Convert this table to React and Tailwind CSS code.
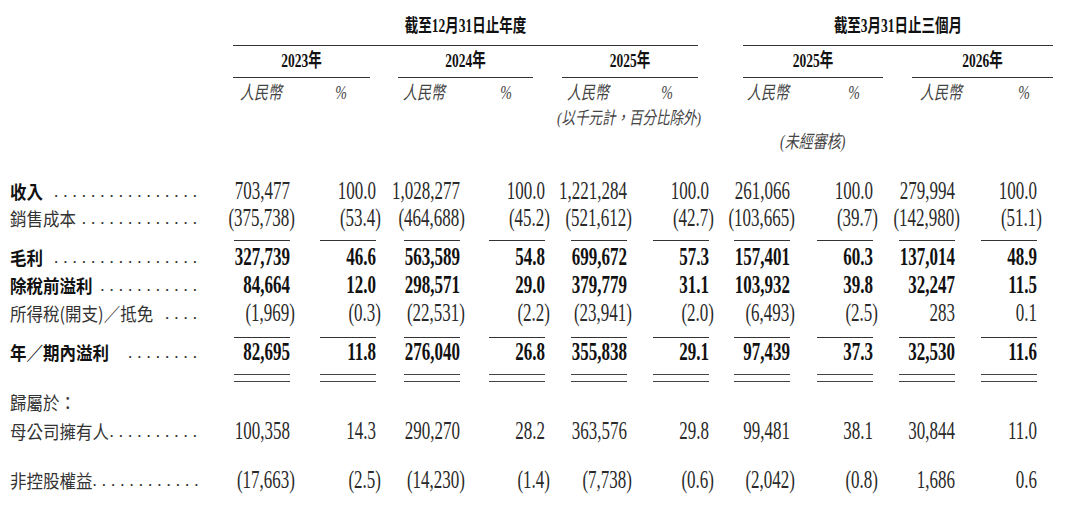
import React from 'react';

const COLS = 'grid grid-cols-[208px_82px_86px_84px_85px_82px_82px_81px_83px_82px_82px]';
const SERIF = "font-['Liberation_Serif','Noto_Sans_CJK_TC',serif]";
const CJK = "font-['Noto_Sans_CJK_TC',sans-serif]";

const ROWS = [
  { label: '收入', bold: true, dots: 16, h: 'h-[26px]', vals: ['703,477', '100.0', '1,028,277', '100.0', '1,221,284', '100.0', '261,066', '100.0', '279,994', '100.0'] },
  { label: '銷售成本', dots: 13, h: 'h-[28px]', vals: ['(375,738)', '(53.4)', '(464,688)', '(45.2)', '(521,612)', '(42.7)', '(103,665)', '(39.7)', '(142,980)', '(51.1)'] },
  { rule: 'single', h: 'h-[12px]', pad: 'pt-[8px]' },
  { label: '毛利', bold: true, numBold: true, dots: 16, h: 'h-[26px]', vals: ['327,739', '46.6', '563,589', '54.8', '699,672', '57.3', '157,401', '60.3', '137,014', '48.9'] },
  { label: '除稅前溢利', bold: true, numBold: true, dots: 11, h: 'h-[30px]', vals: ['84,664', '12.0', '298,571', '29.0', '379,779', '31.1', '103,932', '39.8', '32,247', '11.5'] },
  { label: '所得稅(開支)／抵免', dots: 4, h: 'h-[26px]', vals: ['(1,969)', '(0.3)', '(22,531)', '(2.2)', '(23,941)', '(2.0)', '(6,493)', '(2.5)', '283', '0.1'] },
  { rule: 'single', h: 'h-[14px]', pad: 'pt-[11px]' },
  { label: '年／期內溢利', bold: true, numBold: true, dots: 8, h: 'h-[24px]', vals: ['82,695', '11.8', '276,040', '26.8', '355,838', '29.1', '97,439', '37.3', '32,530', '11.6'] },
  { rule: 'double', h: 'h-[24px]', pad: 'pt-[10px]' },
  { label: '歸屬於：', dots: 0, h: 'h-[28px]' },
  { label: '母公司擁有人', dots: 10, h: 'h-[30px]', vals: ['100,358', '14.3', '290,270', '28.2', '363,576', '29.8', '99,481', '38.1', '30,844', '11.0'] },
  { spacer: true, h: 'h-[20px]' },
  { label: '非控股權益', dots: 12, h: 'h-[28px]', vals: ['(17,663)', '(2.5)', '(14,230)', '(1.4)', '(7,738)', '(0.6)', '(2,042)', '(0.8)', '1,686', '0.6'] },
];

function Num({ v, bold }) {
  const neg = v.startsWith('(');
  return (
    <div className="flex items-center justify-end">
      <span className={`inline-block scale-y-[1.45] text-[17px] leading-none whitespace-nowrap ${neg ? '-mr-[5px]' : ''} ${bold ? 'font-bold text-[#111]' : ''}`}>
        {v}
      </span>
    </div>
  );
}

function Label({ row }) {
  return (
    <div className="flex items-center pl-[10px] pr-[6px]">
      <span className={`inline-block scale-y-[1.12] whitespace-nowrap text-[16.5px] leading-none ${CJK} ${row.bold ? 'font-bold text-[#111]' : 'text-[#333]'}`}>
        {row.label}
      </span>
      {row.dots > 0 && (
        <span className="ml-auto whitespace-nowrap text-[17px] leading-none tracking-[5px]">
          {'.'.repeat(row.dots)}
        </span>
      )}
    </div>
  );
}

function Rule({ row }) {
  return (
    <div className={`${COLS} ${row.h}`}>
      <div />
      {Array.from({ length: 10 }).map((_, i) => (
        <div key={i} className={`flex justify-end ${row.pad}`}>
          {row.rule === 'double' ? (
            <div className="w-[56px] h-[8px] border-y border-[#444]" />
          ) : (
            <div className="w-[56px] border-t border-[#333]" />
          )}
        </div>
      ))}
    </div>
  );
}

export default function App() {
  return (
    <div className={`w-[1080px] h-[510px] bg-white text-[#2a2a2a] overflow-hidden ${SERIF}`}>
      {/* period headers */}
      <div className={`${COLS} h-[46px]`}>
        <div />
        <div className="col-span-6 ml-[25px] mr-[11px] pt-[10px] flex items-center justify-center border-b border-[#333]">
          <span className="inline-block scale-y-[1.35] text-[13.5px] font-bold text-[#111] whitespace-nowrap">截至12月31日止年度</span>
        </div>
        <div className="col-span-4 ml-[34px] -mr-[16px] pt-[10px] flex items-center justify-center border-b border-[#333]">
          <span className="inline-block scale-y-[1.35] text-[13.5px] font-bold text-[#111] whitespace-nowrap">截至3月31日止三個月</span>
        </div>
      </div>

      {/* years */}
      <div className={`${COLS} h-[32px]`}>
        <div />
        <div className="col-span-2 ml-[25px] mr-[6px] flex items-center justify-center border-b border-[#333]">
          <span className="inline-block scale-y-[1.4] text-[13.5px] font-bold text-[#111]">2023年</span>
        </div>
        <div className="col-span-2 ml-[22px] mr-[12px] flex items-center justify-center border-b border-[#333]">
          <span className="inline-block scale-y-[1.4] text-[13.5px] font-bold text-[#111]">2024年</span>
        </div>
        <div className="col-span-2 ml-[17px] mr-[11px] flex items-center justify-center border-b border-[#333]">
          <span className="inline-block scale-y-[1.4] text-[13.5px] font-bold text-[#111]">2025年</span>
        </div>
        <div className="col-span-2 ml-[34px] -mr-[10px] flex items-center justify-center border-b border-[#333]">
          <span className="inline-block scale-y-[1.4] text-[13.5px] font-bold text-[#111]">2025年</span>
        </div>
        <div className="col-span-2 ml-[39px] -mr-[16px] flex items-center justify-center border-b border-[#333]">
          <span className="inline-block scale-y-[1.4] text-[13.5px] font-bold text-[#111]">2026年</span>
        </div>
      </div>

      {/* currency / percent */}
      <div className={`${COLS} h-[30px] italic text-[14px] text-[#444] whitespace-nowrap`}>
        <div />
        <div className="flex items-center pl-[32px]"><span className="inline-block scale-y-[1.3]">人民幣</span></div>
        <div className="flex items-center justify-end pr-[29px]"><span className="inline-block scale-y-[1.3]">%</span></div>
        <div className="flex items-center pl-[27px]"><span className="inline-block scale-y-[1.3]">人民幣</span></div>
        <div className="flex items-center justify-end pr-[33px]"><span className="inline-block scale-y-[1.3]">%</span></div>
        <div className="flex items-center pl-[22px]"><span className="inline-block scale-y-[1.3]">人民幣</span></div>
        <div className="flex items-center justify-end pr-[36px]"><span className="inline-block scale-y-[1.3]">%</span></div>
        <div className="flex items-center pl-[38px]"><span className="inline-block scale-y-[1.3]">人民幣</span></div>
        <div className="flex items-center justify-end pr-[13px]"><span className="inline-block scale-y-[1.3]">%</span></div>
        <div className="flex items-center -mr-[20px] pl-[47px]"><span className="inline-block scale-y-[1.3]">人民幣</span></div>
        <div className="flex items-center justify-end pr-[7px]"><span className="inline-block scale-y-[1.3]">%</span></div>
      </div>

      <div className={`${COLS} h-[22px] italic text-[13.5px] text-[#444]`}>
        <div className="col-span-5" />
        <div className="col-span-2 flex items-center pl-[12px] whitespace-nowrap">
          <span className="inline-block scale-y-[1.3]">(以千元計，百分比除外)</span>
        </div>
      </div>

      <div className={`${COLS} h-[24px] italic text-[14px] text-[#444]`}>
        <div className="col-span-7" />
        <div className="col-span-2 flex items-center pl-[71px] whitespace-nowrap">
          <span className="inline-block scale-y-[1.3]">(未經審核)</span>
        </div>
      </div>

      <div className="h-[24px]" />

      {ROWS.map((row, idx) => {
        if (row.rule) return <Rule key={idx} row={row} />;
        if (row.spacer) return <div key={idx} className={row.h} />;
        return (
          <div key={idx} className={`${COLS} ${row.h}`}>
            <Label row={row} />
            {(row.vals || []).map((v, i) => (
              <Num key={i} v={v} bold={row.numBold} />
            ))}
          </div>
        );
      })}
    </div>
  );
}
